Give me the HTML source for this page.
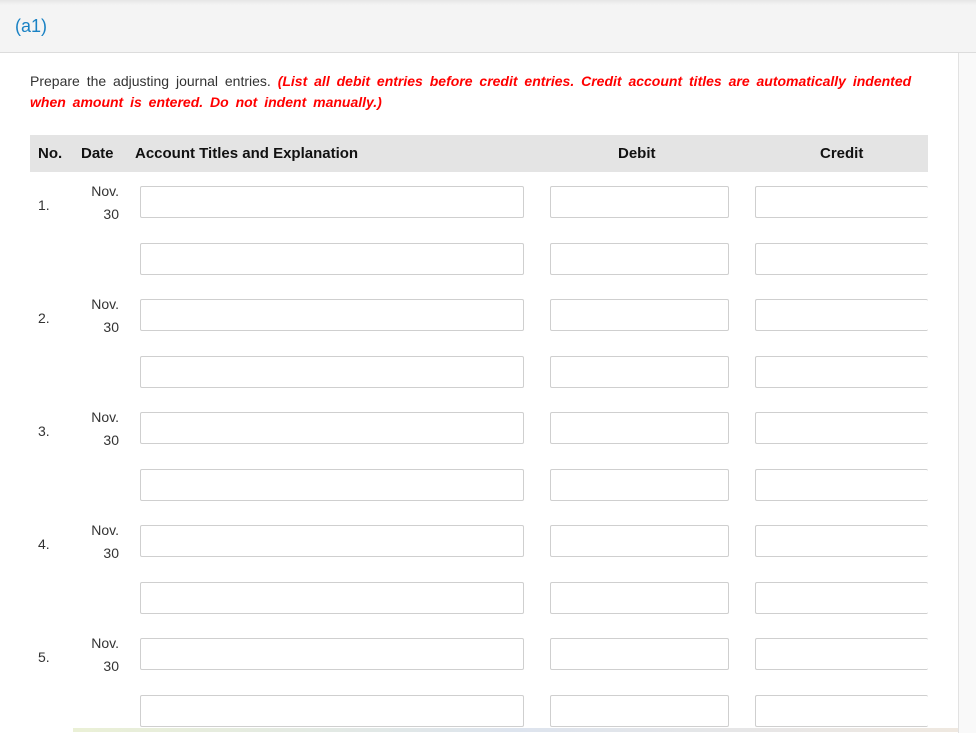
<!DOCTYPE html>
<html><head><style>
body{margin:0;width:976px;height:732px;overflow:hidden;background:#fff;font-family:"Liberation Sans",sans-serif;position:relative}
.top{position:absolute;left:0;top:0;width:976px;height:5px;background:linear-gradient(#e6e6e6,#f4f4f4)}
.band{position:absolute;left:0;top:5px;width:976px;height:47px;background:#f4f4f4;border-bottom:1px solid #dcdcdc}
.a1{position:absolute;left:15px;top:11px;font-size:18px;color:#1a82c4}
.side{position:absolute;left:958px;top:53px;width:18px;height:680px;background:#f9f9f9;border-left:1px solid #e2e2e2}
.prep{position:absolute;left:30px;top:71px;width:920px;font-size:14px;line-height:21px;color:#333;word-spacing:3px;white-space:nowrap}
.prep b{color:#f00;font-style:italic}
.hdr{position:absolute;left:30px;top:135px;width:898px;height:37px;background:#e4e4e4;font-weight:bold;font-size:15px;color:#111}
.hdr span{position:absolute;top:10px}
.in{position:absolute;height:32px;border:1px solid #cfcfcf;border-radius:2px;background:#fff;box-sizing:border-box}
.c{border-right:none}
.t{position:absolute;font-size:14px;color:#333}
.bot{position:absolute;left:73px;top:728px;width:885px;height:4px;background:linear-gradient(90deg,#eaf0d6,#dde4ee,#efe8e0)}
</style></head><body>
<div class="top"></div>
<div class="band"><div class="a1">(a1)</div></div>
<div class="side"></div>
<div class="prep">Prepare the adjusting journal entries. <b>(List all debit entries before credit entries. Credit account titles are automatically indented<br>when amount is entered. Do not indent manually.)</b></div>
<div class="hdr"><span style="left:8px">No.</span><span style="left:51px">Date</span><span style="left:105px">Account Titles and Explanation</span><span style="left:588px">Debit</span><span style="left:790px">Credit</span></div>
<div id="rows"></div>
<div class="bot"></div>
<script>
var h='';
for(var i=0;i<5;i++){var y=186+113*i;
h+='<div class="t" style="left:38px;top:'+(y+11)+'px">'+(i+1)+'.</div>';
h+='<div class="t" style="left:80px;width:39px;text-align:right;top:'+(y-3)+'px">Nov.</div>';
h+='<div class="t" style="left:80px;width:39px;text-align:right;top:'+(y+20)+'px">30</div>';
[y,y+57].forEach(function(yy){
h+='<div class="in" style="left:140px;width:384px;top:'+yy+'px"></div>';
h+='<div class="in" style="left:550px;width:179px;top:'+yy+'px"></div>';
h+='<div class="in c" style="left:755px;width:173px;top:'+yy+'px"></div>';});
}
document.getElementById('rows').innerHTML=h;
</script>
</body></html>
